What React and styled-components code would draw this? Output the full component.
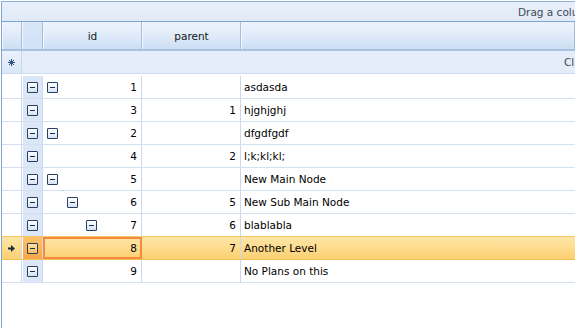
import React from "react";
import styled, { createGlobalStyle, css } from "styled-components";

const GlobalStyle = createGlobalStyle`
  html, body {
    margin: 0;
    padding: 0;
    background: #ffffff;
    overflow: hidden;
  }
  body {
    font-family: "DejaVu Sans", Tahoma, sans-serif;
    font-size: 10.5px;
    color: #000;
  }
`;

const COLS = { indicator: 20, expand: 21, id: 99, parent: 99 };

const Grid = styled.div`
  margin: 1px 0 0 1px;
  height: 327px;
  border-left: 1px solid #7fa4d2;
  border-top: 1px solid #8cafdc;
  display: flex;
  flex-direction: column;
`;

const GroupPanel = styled.div`
  height: 20px;
  box-sizing: border-box;
  border-bottom: 1px solid #7fa4d2;
  background: linear-gradient(#e8eff9, #e1eaf7);
  color: #404a58;
  display: flex;
  align-items: center;
  padding-left: 516px;
  white-space: nowrap;
  overflow: hidden;
`;

const HeaderRow = styled.div`
  display: flex;
  height: 29px;
  box-sizing: border-box;
  border-bottom: 2px solid #a9c0df;
`;

const HeaderCell = styled.div`
  width: ${(p) => (p.$w ? `${p.$w}px` : "auto")};
  flex: ${(p) => (p.$w ? "none" : "1")};
  box-sizing: border-box;
  border-right: 1px solid #a5bcdc;
  border-left: 1px solid #f4f8fd;
  background: ${(p) =>
    p.$flat
      ? "linear-gradient(#dae7f8, #d0e1f6)"
      : "linear-gradient(#edf3fc 0%, #e2ecf9 45%, #ccdef5 100%)"};
  display: flex;
  align-items: center;
  justify-content: center;
  color: #101820;
`;

const NewRow = styled.div`
  display: flex;
  height: 23px;
  box-sizing: border-box;
  border-bottom: 1px solid #cddcf0;
  background: #e4edf9;
`;

const NewIndicator = styled.div`
  width: ${COLS.indicator}px;
  box-sizing: border-box;
  border-right: 1px solid #c8d9ef;
  background: linear-gradient(#eaf1fb, #dbe7f7);
  display: flex;
  align-items: center;
  justify-content: center;
`;

const NewRowText = styled.div`
  flex: 1;
  color: #404a58;
  display: flex;
  align-items: center;
  padding-left: 542px;
  white-space: nowrap;
  overflow: hidden;
`;

const Body = styled.div`
  padding-top: 2px;
  display: flex;
  flex-direction: column;
`;

const Row = styled.div`
  display: flex;
  height: 23px;
  box-sizing: border-box;
  border-bottom: 1px solid #d2e0f2;
  ${(p) =>
    p.$selected &&
    css`
      background: linear-gradient(#fde6a6 0%, #fddc8e 50%, #fbcf72 100%);
      border-top: 1px solid #f5c76c;
      border-bottom: 1px solid #f3c05e;
      margin-top: -1px;
      height: 24px;
    `}
`;

const Cell = styled.div`
  box-sizing: border-box;
  border-right: 1px solid #c9daf0;
  display: flex;
  align-items: center;
  white-space: nowrap;
  overflow: hidden;
`;

const IndicatorCell = styled(Cell)`
  width: ${COLS.indicator}px;
  justify-content: center;
`;

const ExpandCell = styled(Cell)`
  width: ${COLS.expand}px;
  justify-content: center;
  background: ${(p) =>
    p.$selected ? "linear-gradient(#fbc36a, #f8a646)" : "#dbe7f6"};
  box-shadow: inset 1px 0 0 #ffffff;
`;

const IdCell = styled(Cell)`
  width: ${COLS.id}px;
  padding: 0 4px;
  justify-content: space-between;
  ${(p) =>
    p.$selected &&
    css`
      border: 2px solid #f6893a;
      padding: 0 3px 0 2px;
    `}
`;

const Indent = styled.span`
  display: flex;
  padding-left: ${(p) => p.$level * 19.5}px;
`;

const ParentCell = styled(Cell)`
  width: ${COLS.parent}px;
  padding: 0 4px;
  justify-content: flex-end;
`;

const TextCell = styled(Cell)`
  flex: 1;
  border-right: none;
  padding-left: 3px;
`;

const MinusBox = styled.span`
  width: 11px;
  height: 11px;
  box-sizing: border-box;
  border: 1px solid #263f62;
  border-radius: 1px;
  background: ${(p) =>
    p.$selected
      ? "linear-gradient(#fde3a0, #f9bf62)"
      : "linear-gradient(#ffffff, #d7e3f3)"};
  display: flex;
  align-items: center;
  justify-content: center;
  &::after {
    content: "";
    width: 5px;
    height: 1px;
    background: #1b2f4c;
  }
`;

const Asterisk = () => (
  <svg width="7" height="7" viewBox="0 0 7 7">
    <g stroke="#2b4f80" strokeWidth="1">
      <line x1="3.5" y1="0" x2="3.5" y2="7" />
      <line x1="0" y1="3.5" x2="7" y2="3.5" />
      <line x1="1" y1="1" x2="6" y2="6" />
      <line x1="6" y1="1" x2="1" y2="6" />
    </g>
  </svg>
);

const RowArrow = () => (
  <svg width="7" height="7" viewBox="0 0 7 7">
    <path d="M0 2.5 H3 V0 L7 3.5 L3 7 V4.5 H0 Z" fill="#1a2d47" />
  </svg>
);

const rows = [
  { id: 1, parent: "", text: "asdasda", level: 0, children: true },
  { id: 3, parent: 1, text: "hjghjghj", level: 1 },
  { id: 2, parent: "", text: "dfgdfgdf", level: 0, children: true },
  { id: 4, parent: 2, text: "l;k;kl;kl;", level: 1 },
  { id: 5, parent: "", text: "New Main Node", level: 0, children: true },
  { id: 6, parent: 5, text: "New Sub Main Node", level: 1, children: true },
  { id: 7, parent: 6, text: "blablabla", level: 2, children: true },
  { id: 8, parent: 7, text: "Another Level", level: 3, selected: true },
  { id: 9, parent: "", text: "No Plans on this", level: 0 },
];

export default function App() {
  return (
    <>
      <GlobalStyle />
      <Grid>
        <GroupPanel>Drag a column header here to group by that column</GroupPanel>
        <HeaderRow>
          <HeaderCell $w={COLS.indicator} />
          <HeaderCell $w={COLS.expand} $flat />
          <HeaderCell $w={COLS.id}>id</HeaderCell>
          <HeaderCell $w={COLS.parent}>parent</HeaderCell>
          <HeaderCell />
        </HeaderRow>
        <NewRow>
          <NewIndicator>
            <Asterisk />
          </NewIndicator>
          <NewRowText>Click here to add a new row</NewRowText>
        </NewRow>
        <Body>
          {rows.map((r) => (
            <Row key={r.id} $selected={r.selected}>
              <IndicatorCell>{r.selected && <RowArrow />}</IndicatorCell>
              <ExpandCell $selected={r.selected}>
                <MinusBox $selected={r.selected} />
              </ExpandCell>
              <IdCell $selected={r.selected}>
                <Indent $level={r.level}>{r.children && <MinusBox />}</Indent>
                <span>{r.id}</span>
              </IdCell>
              <ParentCell>{r.parent}</ParentCell>
              <TextCell>{r.text}</TextCell>
            </Row>
          ))}
        </Body>
      </Grid>
    </>
  );
}
